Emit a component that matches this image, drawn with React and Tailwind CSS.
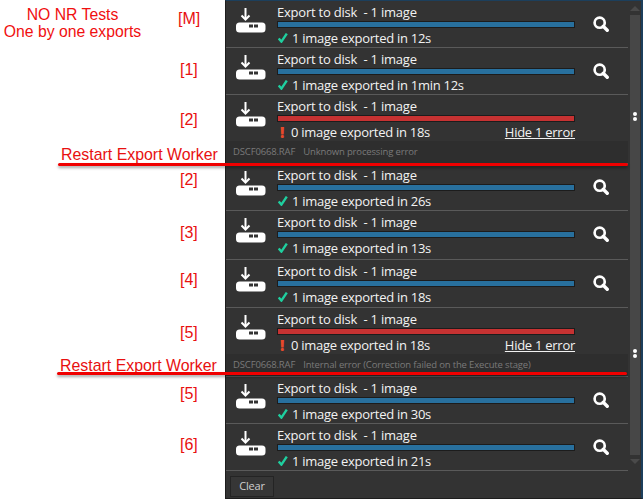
const font = { fontFamily: '"Open Sans", sans-serif' };
const arial = { fontFamily: '"Liberation Sans", sans-serif' };

function Tray() {
  return (
    <svg width="30" height="26" viewBox="0 0 30 26" className="shrink-0">
      <path d="M9.5 0v11" stroke="#fff" strokeWidth="2" fill="none" />
      <path d="M5.5 7.5 9.5 11.5l4-4" stroke="#fff" strokeWidth="2" fill="none" />
      <rect x="0" y="14.5" width="29.5" height="10" rx="3.5" fill="#fff" />
      <rect x="13" y="16.5" width="4" height="3" fill="#333" />
      <rect x="18" y="16.5" width="4" height="3" fill="#333" />
    </svg>
  );
}

function Search() {
  return (
    <svg width="16" height="16" viewBox="0 0 18 18" className="shrink-0">
      <circle cx="7.5" cy="7.5" r="5.7" stroke="#fff" strokeWidth="3" fill="none" />
      <path d="M11.5 11.5 16 16" stroke="#fff" strokeWidth="3.8" strokeLinecap="round" />
    </svg>
  );
}

function Row({ text, error, detail, className = "" }) {
  return (
    <div className={"border-b border-[#5a5a5a] " + className}>
      <div className="flex h-[46px]">
        <div className="w-[51px] pl-[10px] pt-[7px]"><Tray /></div>
        <div className="w-[298px] pt-[2px]">
          <div className="whitespace-pre text-[13px] leading-[18px] tracking-[-0.22px] text-[#f2f2f2]">Export to disk  - 1 image</div>
          <div className={"h-[7px] border border-[#1c1c1c] " + (error ? "bg-[#c63232]" : "bg-[#28709e]")} />
          <div className="mt-[1px] flex items-center justify-between text-[13px] leading-[18px] tracking-[-0.27px] text-[#f2f2f2]">
            <span className="flex items-center">
              {error ? (
                <span className="mr-[4px] w-[10px] text-center text-[15px] font-extrabold leading-none text-[#e8492a]">!</span>
              ) : (
                <svg width="10" height="10" viewBox="0 0 10 10" className="ml-[1px] mr-[4px]">
                  <path d="M0.7 5.5 3.4 8.6 8.8 0.6" stroke="#1fcf9f" strokeWidth="2.4" fill="none" />
                </svg>
              )}
              {text}
            </span>
            {error && <span className="underline">Hide 1 error</span>}
          </div>
        </div>
        {!error && <div className="ml-[18px] pt-[15px]"><Search /></div>}
      </div>
      {error && (
        <div className="flex h-[22px] items-center gap-[8px] bg-[#2e2e2e] pl-[7px] text-[9.5px] tracking-[-0.15px] text-[#7a7a7a]">
          <span>DSCF0668.RAF</span>
          <span>{detail}</span>
        </div>
      )}
    </div>
  );
}

function Arrow({ down }) {
  return (
    <div className={"mx-auto h-0 w-0 border-x-[5px] border-x-transparent " + (down ? "border-t-[5px] border-t-[#4a4a4a]" : "border-b-[5px] border-b-[#4a4a4a]")} />
  );
}

function Dots({ className }) {
  return (
    <div className={"absolute left-[633px] flex flex-col gap-[1px] " + className}>
      <div className="h-[4px] w-[4px] rounded-full bg-white" />
      <div className="h-[4px] w-[4px] rounded-full bg-white" />
    </div>
  );
}

const labels = [
  ["[M]", 178, 9], ["[1]", 180, 60], ["[2]", 180, 110], ["[2]", 180, 170], ["[3]", 180, 223],
  ["[4]", 180, 270], ["[5]", 180, 323], ["[5]", 180, 384], ["[6]", 180, 435],
];

export default function App() {
  return (
    <div className="relative h-[500px] w-[643px] overflow-hidden bg-white" style={font}>
      <div className="ml-[225px] flex h-[499px] w-[418px] border-t border-r-2 border-b border-l border-t-[#1c3f5c] border-r-[#1c3f5c] border-b-[#1d1d1d] border-l-[#1d1d1d] bg-[#333333]">
        <div className="flex w-[402px] flex-col">
          <Row text="1 image exported in 12s" />
          <Row text="1 image exported in 1min 12s" />
          <Row error text="0 image exported in 18s" detail="Unknown processing error" />
          <Row text="1 image exported in 26s" />
          <Row text="1 image exported in 13s" className="pb-[2px]" />
          <Row text="1 image exported in 18s" className="pb-[1px]" />
          <Row error text="0 image exported in 18s" detail="Internal error (Correction failed on the Execute stage)" />
          <Row text="1 image exported in 30s" />
          <Row text="1 image exported in 21s" />
          <div className="pl-[4px] pt-[5px]">
            <div className="flex h-[21px] w-[44px] items-center justify-center border border-[#242424] bg-[#363636] text-[11px] tracking-[-0.2px] text-[#cfcfcf]">Clear</div>
          </div>
        </div>
        <div className="ml-[2px] flex h-[463px] w-[10px] flex-col pt-[5px]">
          <Arrow />
          <div className="my-[4px] flex-1 bg-[#474747]" />
          <Arrow down />
        </div>
      </div>

      <Dots className="top-[112px]" />
      <Dots className="top-[349px]" />

      <div className="absolute left-0 top-[6px] w-[145px] whitespace-nowrap text-center text-[15.75px] leading-[17px] text-[#f01010]" style={arial}>NO NR Tests<br />One by one exports</div>
      {labels.map(([t, x, y]) => (
        <div key={t + y} className="absolute text-[16px] leading-[20px] text-[#e81010]" style={{ left: x, top: y, ...arial }}>{t}</div>
      ))}
      <div className="absolute left-[61px] top-[146px] text-[15.9px] leading-[18px] text-[#e81010]" style={arial}>Restart Export Worker</div>
      <div className="absolute left-[58px] top-[163px] h-[3px] w-[570px] rounded-full bg-[#f00000] shadow-[0_2px_3px_rgba(0,0,0,0.35)]" />
      <div className="absolute left-[60px] top-[357px] text-[15.9px] leading-[18px] text-[#e81010]" style={arial}>Restart Export Worker</div>
      <div className="absolute left-[57px] top-[372px] h-[3px] w-[570px] rounded-full bg-[#f00000] shadow-[0_2px_3px_rgba(0,0,0,0.35)]" />
    </div>
  );
}
